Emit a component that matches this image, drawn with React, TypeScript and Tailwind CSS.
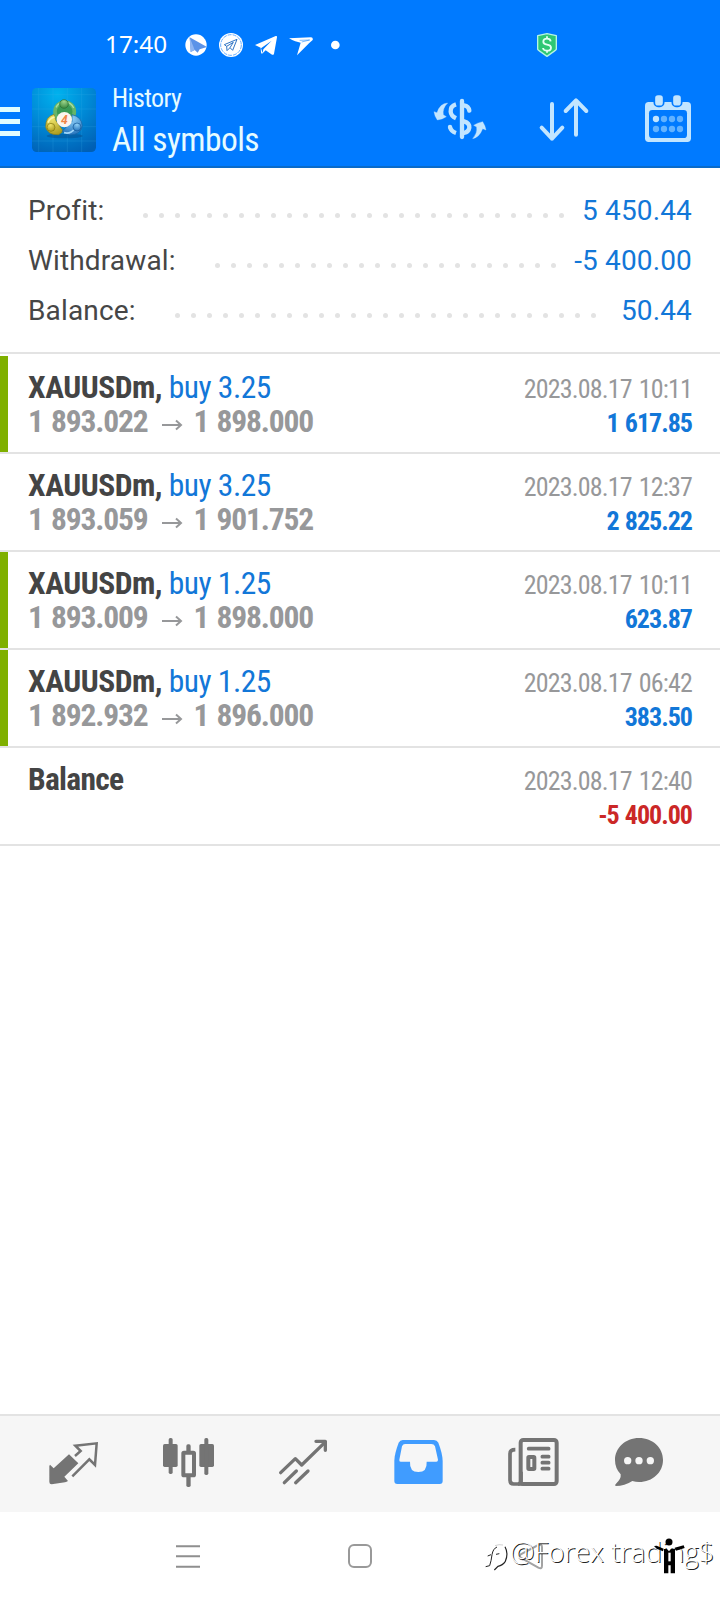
const deals = [
  { id: 1, volume: 'buy 3.25', open: '1 893.022', close: '1 898.000', time: '2023.08.17 10:11', profit: '1 617.85', marked: true },
  { id: 2, volume: 'buy 3.25', open: '1 893.059', close: '1 901.752', time: '2023.08.17 12:37', profit: '2 825.22', marked: false },
  { id: 3, volume: 'buy 1.25', open: '1 893.009', close: '1 898.000', time: '2023.08.17 10:11', profit: '623.87', marked: true },
  { id: 4, volume: 'buy 1.25', open: '1 892.932', close: '1 896.000', time: '2023.08.17 06:42', profit: '383.50', marked: true },
];

const summary = [
  { label: 'Profit:', value: '5 450.44', dots: 27, width: 'w-[115px]' },
  { label: 'Withdrawal:', value: '-5 400.00', dots: 22, width: 'w-[187px]' },
  { label: 'Balance:', value: '50.44', dots: 27, width: 'w-[147px]' },
];

function StatusBar() {
  return (
    <div className="flex h-[88px] items-center pl-[105px] text-white">
      <span className="w-[79px] font-['Noto_Sans',sans-serif] text-[24.3px]">17:40</span>
      <div className="flex items-center gap-[11px] pt-[2px]">
        <svg className="size-6" viewBox="553 99 72 72">
          <circle cx="589" cy="135" r="32" fill="#fff" />
          <path d="M570 112 L622 141 L600 148 L594 158 L585 150 L573 156 Z" fill="#5b93e8" />
          <path d="M570 112 L585 150 L573 156 Z" fill="#8fb6f2" />
        </svg>
        <svg className="size-6" viewBox="657 99 72 72">
          <circle cx="693" cy="135" r="36" fill="#fff" />
          <circle cx="693" cy="135" r="31" fill="none" stroke="#4b9dff" strokeWidth="2.5" strokeDasharray="12 3" />
          <path d="M673 134 L711 118 L698 151 L690 143 L681 152 L680 139 Z M680 139 L700 127 L690 143" fill="none" stroke="#2f74c4" strokeWidth="3" strokeLinejoin="round" />
        </svg>
        <svg className="size-6" viewBox="763 99 72 72">
          <path d="M766 135 L828 108 Q833 107 832 112 L823 161 Q821 167 815 163 L798 151 L789 160 Q785 163 784 157 L783 143 Z" fill="#fff" />
          <path d="M784 145 L816 122 L791 148 L789 159 Z" fill="#007aff" />
        </svg>
        <svg className="size-6" viewBox="868 99 72 72">
          <path d="M868 115 L934 112 Q941 113 939 120 L928 130 L892 166 L903 128 Q888 126 868 115 Z" fill="#fff" />
          <path d="M900 121 L930 120 L906 126" fill="none" stroke="#007aff" strokeWidth="1.5" />
        </svg>
        <svg className="size-6" viewBox="971 99 72 72">
          <circle cx="1005" cy="135" r="13" fill="#fff" />
        </svg>
      </div>
      <svg className="mt-[2px] ml-[189px] h-6 w-5" viewBox="531 99 60 72">
        <path d="M561 101 L589 107 V148 Q588 151 561 169 Q534 151 533 148 V107 Z" fill="#2fc774" stroke="#b5f5e3" strokeWidth="4" strokeLinejoin="round" />
        <path d="M572 124 Q571 116 561 116 Q550 116 550 125 Q550 132 561 134 Q573 136 573 143 Q573 152 561 152 Q550 152 549 144 M561 109 V117 M561 151 V158" fill="none" stroke="#e4fff4" strokeWidth="5.5" />
      </svg>
    </div>
  );
}

function AppLogo() {
  return (
    <svg className="size-16" viewBox="12 12 192 192">
      <defs>
        <radialGradient id="tile" cx="0.4" cy="0.1" r="1">
          <stop offset="0" stopColor="#00b2ee" />
          <stop offset="0.5" stopColor="#0089d6" />
          <stop offset="1" stopColor="#005fb4" />
        </radialGradient>
        <radialGradient id="green" cx="0.5" cy="0.2" r="0.9">
          <stop offset="0" stopColor="#9fd68c" />
          <stop offset="1" stopColor="#2c7f36" />
        </radialGradient>
        <radialGradient id="yellow" cx="0.4" cy="0.2" r="0.9">
          <stop offset="0" stopColor="#f0e56a" />
          <stop offset="1" stopColor="#a59417" />
        </radialGradient>
        <radialGradient id="sky" cx="0.5" cy="0.2" r="0.9">
          <stop offset="0" stopColor="#8fd0f7" />
          <stop offset="1" stopColor="#1667b5" />
        </radialGradient>
      </defs>
      <rect x="12" y="12" width="192" height="192" rx="14" fill="url(#tile)" />
      <path d="M32 12 V204 M75 12 V204 M118 12 V204 M161 12 V204 M12 32 H204 M12 75 H204 M12 128 H204 M12 171 H204" stroke="#3fb0ea" strokeWidth="1.5" opacity="0.4" />
      <ellipse cx="110" cy="156" rx="54" ry="7" fill="#04427c" opacity="0.4" />
      <circle cx="110" cy="83" r="29" fill="#3b9a55" stroke="#65b56a" strokeWidth="11" />
      <path d="M84 70 Q92 54 110 54 Q130 55 137 72" fill="none" stroke="#a9dca0" strokeWidth="4" />
      <circle cx="108" cy="60" r="13" fill="url(#green)" stroke="#2b6e33" strokeWidth="2" />
      <path d="M78 91 Q52 98 53 130 Q60 154 92 152 L106 142 L84 110 Z" fill="url(#yellow)" stroke="#8b7f18" strokeWidth="2" />
      <path d="M60 116 Q66 102 80 99" fill="none" stroke="#fbf5a6" strokeWidth="5" />
      <circle cx="69" cy="130" r="12" fill="url(#yellow)" stroke="#83770d" strokeWidth="2" />
      <path d="M132 92 Q161 98 163 126 Q158 153 124 153 L102 142 L132 112 Z" fill="url(#sky)" stroke="#1562a4" strokeWidth="2" />
      <path d="M108 146 Q128 151 140 134" fill="none" stroke="#9ed6fa" strokeWidth="5" />
      <circle cx="147" cy="129" r="12" fill="url(#sky)" stroke="#135797" strokeWidth="2" />
      <circle cx="109" cy="107" r="23" fill="#fbf5ee" />
      <text x="109" y="120" textAnchor="middle" fontFamily="Roboto, sans-serif" fontWeight="700" fontStyle="italic" fontSize="36" fill="#f08446">4</text>
    </svg>
  );
}

function Toolbar() {
  return (
    <div className="flex h-[80px] border-b-2 border-[#0a6bc9]">
      <div className="mt-[19px] flex w-8 flex-col gap-[7px]">
        <div className="h-[5px] w-5 bg-[#e0fcff]" />
        <div className="h-[5px] w-5 bg-[#e0fcff]" />
        <div className="h-[5px] w-5 bg-[#e0fcff]" />
      </div>
      <AppLogo />
      <div className="-mt-[2px] ml-4 text-[#e6fbff]">
        <div className="text-[26px] leading-[24px] font-[450] tracking-[-0.6px]">History</div>
        <div className="mt-[10px] text-[33.5px] leading-[40px] font-[450] tracking-[-0.55px]">All symbols</div>
      </div>
      <div className="ml-auto flex">
        <svg className="h-[78px] w-[104px]" viewBox="144 264 312 234" fill="none" stroke="#c2e5ff">
          <path d="M306 303 V411" strokeWidth="13" strokeLinecap="round" />
          <path d="M288 313 Q271 318 272 335 Q273 348 288 355" strokeWidth="13" />
          <path d="M312 316 Q326 318 328 332 M312 364 Q329 369 328 383 Q326 396 312 399" strokeWidth="13" strokeLinecap="round" />
          <path d="M270 381 Q273 394 288 399" strokeWidth="13" />
          <circle cx="270" cy="381" r="6.5" fill="#c2e5ff" stroke="none" />
          <path d="M263 309 Q240 310 231 338 L222 335 Q224 350 232 360 Q248 358 259 350 L250 344 Q247 325 263 309 Z" fill="#c2e5ff" />
          <path d="M338 416 Q358 412 368 386 L378 390 Q375 375 368 365 Q352 368 341 376 L350 381 Q353 399 338 416 Z" fill="#c2e5ff" />
        </svg>
        <svg className="h-[78px] w-[104px]" viewBox="456 264 312 234" fill="none" stroke="#c2e5ff" strokeWidth="12" strokeLinecap="round" strokeLinejoin="round">
          <path d="M576 312 V416 M545 383 L576 416 L607 383" />
          <path d="M648 404 V302 M617 333 L648 301 L679 333" />
        </svg>
        <svg className="h-[78px] w-[104px]" viewBox="768 264 312 234">
          <rect x="855" y="306" width="138" height="120" rx="11" fill="#c2e5ff" />
          <rect x="867" y="330" width="114" height="84" rx="10" fill="#007aff" />
          <rect x="883" y="283" width="28" height="36" rx="11" fill="#c2e5ff" stroke="#007aff" strokeWidth="5" />
          <rect x="937" y="283" width="28" height="36" rx="11" fill="#c2e5ff" stroke="#007aff" strokeWidth="5" />
          <g fill="#62b2ff">
            <circle cx="888" cy="357" r="9.5" fill="#c2e5ff" />
            <circle cx="912" cy="357" r="9.5" />
            <circle cx="936" cy="357" r="9.5" />
            <circle cx="960" cy="357" r="9.5" />
            <circle cx="888" cy="387" r="9.5" />
            <circle cx="912" cy="387" r="9.5" />
            <circle cx="936" cy="387" r="9.5" />
            <circle cx="960" cy="387" r="9.5" />
          </g>
        </svg>
      </div>
    </div>
  );
}

function TabBar() {
  return (
    <div className="flex h-[98px] border-t-2 border-[#e3e3e3] bg-[#f6f6f6] pl-4">
      {/* quotes */}
      <svg className="h-24 w-[115px]" viewBox="48 33 345 288">
        <path d="M207 148 L235 175 L193 215 L204 228 Q200 231 195 232 L155 238 Q148 238 148 231 V183 L150 179 L161 190 Z" fill="#747474" />
        <path d="M225 153 L242 138 L226 122 L290 115 L285 180 L268 163 L217 214" fill="none" stroke="#747474" strokeWidth="7.5" />
      </svg>
      {/* charts */}
      <svg className="h-24 w-[115px]" viewBox="393 33 345 288">
        <g fill="#747474">
          <rect x="489" y="117" width="44" height="69" rx="5" />
          <rect x="506" y="99" width="12" height="108" rx="5" />
          <rect x="598" y="117" width="44" height="69" rx="5" />
          <rect x="613" y="99" width="12" height="111" rx="5" />
          <rect x="559" y="118" width="13" height="128" rx="5" />
        </g>
        <rect x="550" y="143" width="32" height="68" rx="2" fill="#f6f6f6" stroke="#747474" strokeWidth="12" />
      </svg>
      {/* trade */}
      <svg className="h-24 w-[115px]" viewBox="738 33 345 288" fill="none" stroke="#747474" strokeWidth="10" strokeLinecap="round" strokeLinejoin="round">
        <path d="M842 203 L886 161 L905 180 L974 113" />
        <path d="M948 109 H976 V136" />
        <path d="M853 233 L889 198 M887 233 L924 198" />
      </svg>
      {/* history, active tab */}
      <svg className="h-24 w-[115px]" viewBox="3 33 345 288">
        <path d="M128 105 H222 Q231 105 235 113 Q248 147 248 168 V228 Q248 237 239 237 H112 Q103 237 103 228 V168 Q103 147 116 113 Q120 105 128 105 Z" fill="#409cff" />
        <path d="M135 117 H214 Q222 117 225 124 L234 164 Q234 170 229 170 H200 Q202 201 175 201 Q148 201 150 170 H122 Q117 170 118 164 L126 124 Q129 117 135 117 Z" fill="#f6f6f6" />
      </svg>
      {/* news */}
      <svg className="h-24 w-[115px]" viewBox="348 33 345 288" fill="none" stroke="#747474">
        <rect x="482" y="105" width="108" height="132" rx="8" strokeWidth="12" />
        <path d="M466 134 Q450 134 450 146 V226 Q450 237 461 237 H490" strokeWidth="11" />
        <path d="M483 200 V226 Q483 237 474 237" strokeWidth="11" />
        <path d="M506 131 H566 M547 155 H566 M547 173 H566 M547 191 H566" strokeWidth="11" strokeLinecap="round" />
        <rect x="505" y="156" width="18" height="36" rx="2" strokeWidth="12" />
      </svg>
      {/* messages */}
      <svg className="h-24 w-[115px]" viewBox="693 33 345 288">
        <path d="M837 99 C879 99 909 129 909 165 C909 202 878 231 837 231 Q827 231 817 228 Q794 243 767 243 Q763 240 768 236 Q784 222 782 208 Q765 190 765 165 C765 129 796 99 837 99 Z" fill="#747474" />
        <circle cx="803" cy="167" r="11" fill="#f6f6f6" />
        <circle cx="837" cy="167" r="11" fill="#f6f6f6" />
        <circle cx="871" cy="167" r="11" fill="#f6f6f6" />
      </svg>
    </div>
  );
}

function SystemNav() {
  return (
    <div className="relative flex h-[88px] pl-[102px]">
      <svg className="h-[88px] w-[172px]" viewBox="306 321 516 264" stroke="#8f8f8f" strokeWidth="6">
        <path d="M528 424 H600 M528 454 H600 M528 485 H600" />
      </svg>
      <svg className="h-[88px] w-[172px]" viewBox="822 321 516 264" fill="none" stroke="#999" strokeWidth="6">
        <rect x="1047" y="420" width="66" height="66" rx="15" />
      </svg>
      <svg className="h-[88px] w-[172px]" viewBox="258 321 516 264" fill="none" stroke="#a3a3a3" strokeWidth="6">
        <path d="M482 448 L535 420 Q546 416 546 427 V482 Q546 494 535 488 L482 458 Q477 453 482 448 Z" />
      </svg>

      {/* watermark */}
      <div className="absolute top-[18px] left-[475px] h-[50px] w-[240px]">
        <svg className="absolute inset-0 size-full" viewBox="0 0 720 150" fill="none">
          <path d="M66 51 Q54 56 51 74 Q49 92 44 107 L32 110 M38 78 L48 74 M63 73 L73 71" stroke="#222" strokeWidth="3" />
          <path d="M90 50 Q101 70 91 94 Q83 106 69 109 L58 120" stroke="#222" strokeWidth="3.5" />
          <path d="M60 47 Q72 42 84 45" stroke="#bbb" strokeWidth="2" />
        </svg>
        <span className="absolute -top-px left-[35px] font-['Open_Sans',sans-serif] text-[27.5px] leading-[46px] font-light whitespace-nowrap text-white [text-shadow:1px_1px_0_#222]">
          @Forex trading$
        </span>
        <svg className="absolute inset-0 size-full" viewBox="0 0 720 150" fill="#000">
          <circle cx="582" cy="36" r="10.5" />
          <path d="M537 48 L545 47 L566 56 L564 64 L545 56 Z M599 53 L626 46 L629 54 L603 62 Z" />
          <path d="M567 57 H576 L582 64 L588 56 H600 V130 H587 V106 H580 V130 H567 Z" />
          <path d="M580 68 H587 V94 H580 Z" fill="#fff" />
        </svg>
      </div>
    </div>
  );
}

export default function App() {
  return (
    <div className="flex h-[1600px] w-[720px] flex-col overflow-hidden bg-white font-['Roboto_Condensed',Roboto,sans-serif]">
      <header className="bg-[#007aff]">
        <StatusBar />
        <Toolbar />
      </header>

      <section className="border-b-2 border-[#e3e3e3] px-7 pt-[18px] pb-4 font-['Roboto',sans-serif] text-[28px] leading-[50px] tracking-[0.15px] text-[#464646]">
        {summary.map((row) => (
          <div key={row.label} className="flex h-[50px]">
            <span className={row.width}>{row.label}</span>
            <div className="flex gap-[11px] pt-[27px]">
              {Array.from({ length: row.dots }, (_, i) => (
                <i key={i} className="size-[5px] rounded-full bg-[#e3e3e3]" />
              ))}
            </div>
            <span className="ml-auto text-[#1277d8]">{row.value}</span>
          </div>
        ))}
      </section>

      <main className="flex-1 pt-[2px]">
        {deals.map((deal) => (
          <div key={deal.id} className="flex h-[98px] border-b-2 border-[#e3e3e3] pr-7">
            <div className={deal.marked ? 'w-2 bg-[#7fb000]' : 'w-2'} />
            <div className="pt-[15px] pl-5 text-[31.5px] leading-[34px]">
              <div className="tracking-[-0.5px] text-[#1277d8]">
                <b className="text-[#444]">XAUUSDm,</b> {deal.volume}
              </div>
              <div className="flex font-bold tracking-[-1.15px] text-[#97989a] [word-spacing:2px]">
                <span>{deal.open}</span>
                <svg className="mr-[11px] ml-[13px] mt-[14px] h-3 w-[22px]" viewBox="0 0 22 12" fill="none" stroke="#97989a" strokeWidth="2">
                  <path d="M1 6 H20 M15 1.5 L20 6 L15 10.5" />
                </svg>
                <span>{deal.close}</span>
              </div>
            </div>
            <div className="ml-auto pt-4 text-right text-[26px] leading-[34px]">
              <div className="tracking-[-0.85px] text-[#97989a] [word-spacing:2px]">{deal.time}</div>
              <div className="font-bold tracking-[-1px] text-[#1277d8] [word-spacing:1px]">{deal.profit}</div>
            </div>
          </div>
        ))}
        <div className="flex h-[98px] justify-between border-b-2 border-[#e3e3e3] px-7">
          <b className="pt-[15px] text-[31.5px] leading-[34px] tracking-[-0.7px] text-[#444]">Balance</b>
          <div className="pt-4 text-right text-[26px] leading-[34px]">
            <div className="tracking-[-0.85px] text-[#97989a] [word-spacing:2px]">2023.08.17 12:40</div>
            <div className="font-bold tracking-[-1px] text-[#cb2727] [word-spacing:1px]">-5 400.00</div>
          </div>
        </div>
      </main>

      <TabBar />
      <SystemNav />
    </div>
  );
}
